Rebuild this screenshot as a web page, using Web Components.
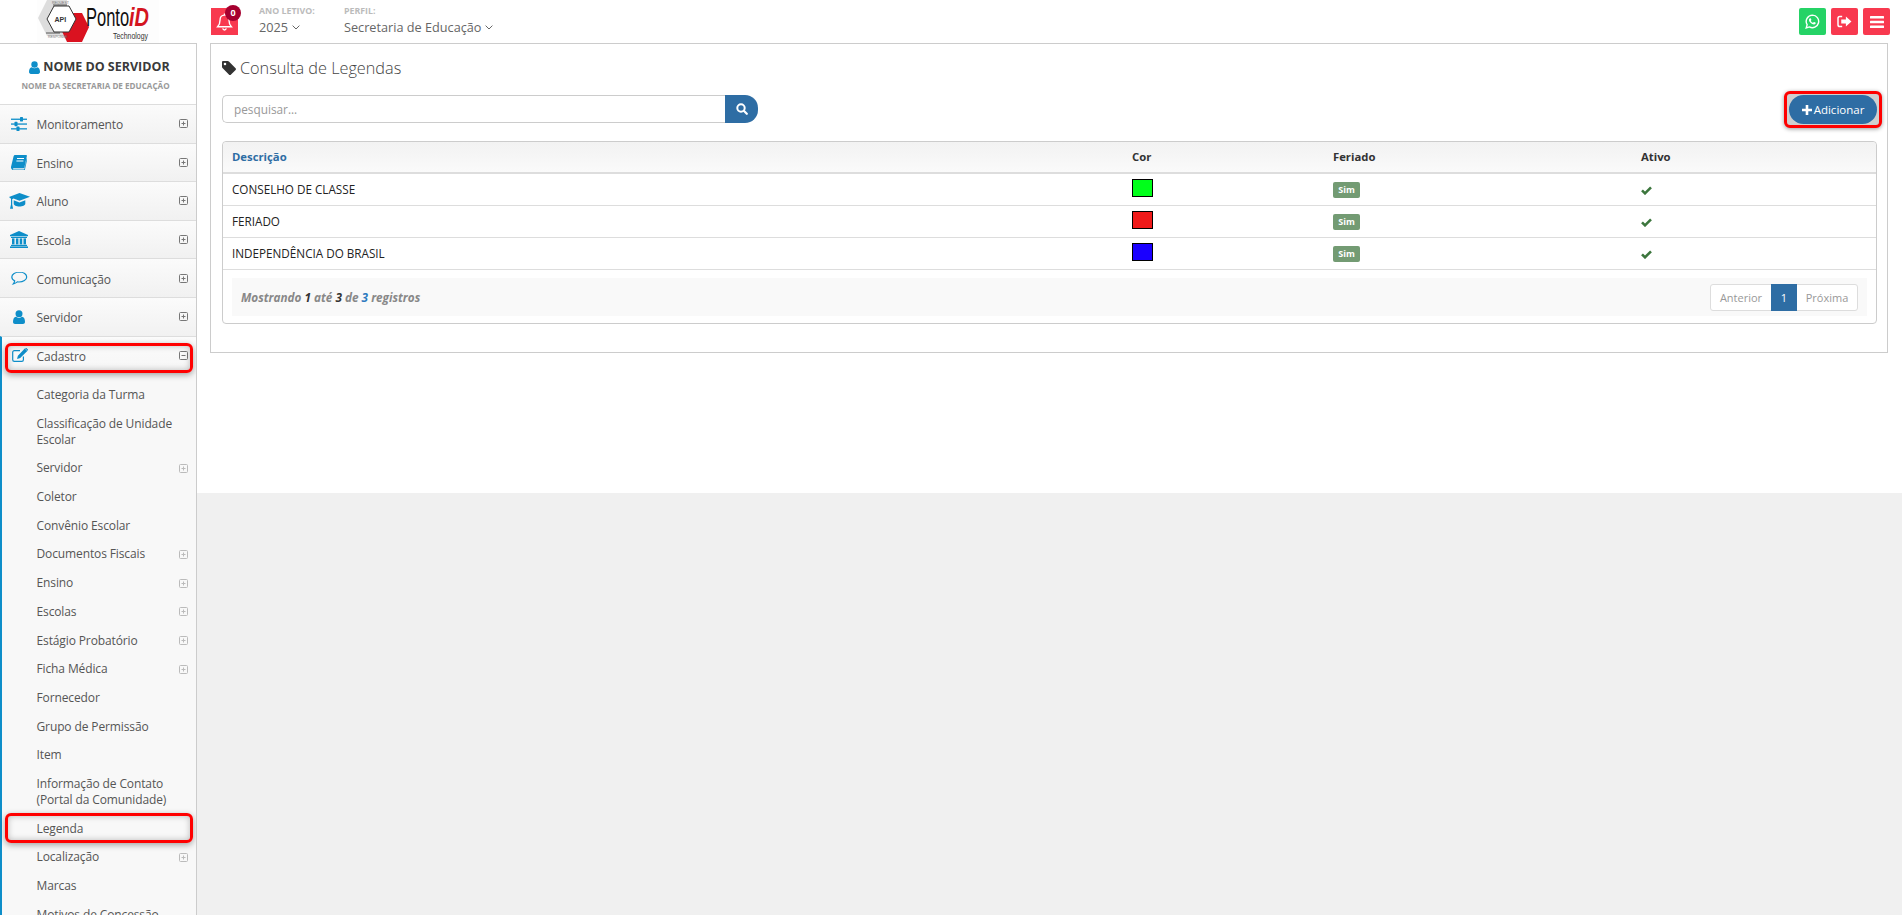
<!DOCTYPE html>
<html lang="pt-BR">
<head>
<meta charset="utf-8">
<title>Consulta de Legendas</title>
<style>
  html, body { margin: 0; height: 100%; overflow: hidden; background: #f0f0f0; }
  body { font-family: "Open Sans", "Liberation Sans", sans-serif; font-size: 12px; color: #555; }
</style>
</head>
<body>
<pid-app>
  <pid-header slot="header"></pid-header>
  <pid-sidebar slot="side">
    <pid-nav-item icon="sliders" label="Monitoramento"></pid-nav-item>
    <pid-nav-item icon="book" label="Ensino"></pid-nav-item>
    <pid-nav-item icon="cap" label="Aluno"></pid-nav-item>
    <pid-nav-item icon="bank" label="Escola"></pid-nav-item>
    <pid-nav-item icon="comment" label="Comunicação"></pid-nav-item>
    <pid-nav-item icon="user" label="Servidor"></pid-nav-item>
    <pid-nav-item icon="edit" label="Cadastro" open marked>
      <pid-sub-item>Categoria da Turma</pid-sub-item>
      <pid-sub-item>Classificação de Unidade Escolar</pid-sub-item>
      <pid-sub-item more>Servidor</pid-sub-item>
      <pid-sub-item>Coletor</pid-sub-item>
      <pid-sub-item>Convênio Escolar</pid-sub-item>
      <pid-sub-item more>Documentos Fiscais</pid-sub-item>
      <pid-sub-item more>Ensino</pid-sub-item>
      <pid-sub-item more>Escolas</pid-sub-item>
      <pid-sub-item more>Estágio Probatório</pid-sub-item>
      <pid-sub-item more>Ficha Médica</pid-sub-item>
      <pid-sub-item>Fornecedor</pid-sub-item>
      <pid-sub-item>Grupo de Permissão</pid-sub-item>
      <pid-sub-item>Item</pid-sub-item>
      <pid-sub-item>Informação de Contato (Portal da Comunidade)</pid-sub-item>
      <pid-sub-item marked>Legenda</pid-sub-item>
      <pid-sub-item more>Localização</pid-sub-item>
      <pid-sub-item>Marcas</pid-sub-item>
      <pid-sub-item>Motivos de Concessão</pid-sub-item>
    </pid-nav-item>
  </pid-sidebar>
  <pid-legend-page slot="main">
    <pid-legend-row color="#00ff1a" active>CONSELHO DE CLASSE</pid-legend-row>
    <pid-legend-row color="#f01a1a" active>FERIADO</pid-legend-row>
    <pid-legend-row color="#1a00ff" active>INDEPENDÊNCIA DO BRASIL</pid-legend-row>
  </pid-legend-page>
</pid-app>

<script>
// icons are all hand drawn, same names used by the nav items and buttons
const ICONS = {
  sliders: `<svg viewBox="0 0 16 14" width="16" height="14" fill="#0e8ec9"><rect x="0" y="1.6" width="16" height="1.3"/><rect x="0" y="6.4" width="16" height="1.3"/><rect x="0" y="11.2" width="16" height="1.3"/><rect x="9" y="0" width="3" height="4.4" rx=".6"/><rect x="3.5" y="4.8" width="3" height="4.4" rx=".6"/><rect x="5.5" y="9.6" width="3" height="4.4" rx=".6"/></svg>`,
  book: `<svg viewBox="0 0 16 15" width="16" height="15"><path fill="#0e8ec9" d="M4 0h11.2c.6 0 .8.4.7 1L13.400 12.400c-.1.5-.4.8-1 .8H2.800c-.7 0-1 .3-.9.7s.4.5.9.5h9.600c.5 0 .8-.2 1-.7l2.300-10.400.3.2c.3.2.3.5.2.9l-2.300 10.300c-.2.500-.6.800-1.200.800H2.300C1 14.500 0 13.600 0 12.400c0-.3 0-.6.1-.9L2.600 1.200C2.800.4 3.300 0 4 0z"/><path stroke="#fff" stroke-width="1" d="M6 3.500h7M5.400 6h7"/></svg>`,
  cap: `<svg viewBox="0 0 21 16" width="21" height="16" fill="#0e8ec9"><path d="M10.500 0 21 3.800 10.500 7.800 4.500 5.500 3.200 6.200v5.300l.9 4.200H1l1-4.200V5.800L0 4z"/><path d="M4.700 7.200 10.500 9.400l5.800-2.200v3.500c0 1.500-2.600 2.800-5.800 2.800s-5.800-1.300-5.800-2.800z"/></svg>`,
  bank: `<svg viewBox="0 0 18 17" width="18" height="17" fill="#0e8ec9"><path d="M9 0 18 4v1.300H0V4z"/><rect x="1" y="5.800" width="16" height="1.200"/><rect x="2" y="7.400" width="2.500" height="6"/><rect x="5.900" y="7.400" width="2.500" height="6"/><rect x="9.700" y="7.400" width="2.500" height="6"/><rect x="13.500" y="7.400" width="2.500" height="6"/><rect x="1" y="13.800" width="16" height="1.200"/><rect x="0" y="15.400" width="18" height="1.600"/></svg>`,
  comment: `<svg viewBox="0 0 17 15" width="17" height="15" fill="none" stroke="#0e8ec9" stroke-width="1.200"><path d="M8.500 1C4.300 1 .8 3.200.8 6c0 1.600 1.100 3 2.900 3.900-.2 1.100-.7 2.200-1.400 3 1.500-.3 3-1.100 4-2 .6.100 1.200.100 1.700.100 4.200 0 7.700-2.200 7.700-5S12.700 1 8.500 1z"/></svg>`,
  user: `<svg viewBox="0 0 12 14" width="12" height="14" fill="#0e8ec9"><circle cx="6" cy="3.700" r="3.500"/><path d="M0 12c0-3 1-5 3-5.200.8.700 1.800 1.100 3 1.100s2.200-.4 3-1.100c2 .2 3 2.200 3 5.200 0 1.300-.9 2-2 2H2c-1.100 0-2-.7-2-2z"/></svg>`,
  edit: `<svg viewBox="0 0 16 14" width="16" height="14" fill="none"><path stroke="#0e8ec9" stroke-width="1.200" d="M8 2.600H2.300C1.400 2.600.7 3.300.7 4.200v7.500c0 .9.700 1.600 1.600 1.600h7.500c.9 0 1.600-.7 1.600-1.600V8.500"/><path fill="#0e8ec9" d="M12.800.6 15.300 3 8.200 10.100 5 11l.9-3.300zM13.500 0c.3-.2.600-.2.900 0l1.500 1.500c.2.300.2.600 0 .9l-.3.300-2.400-2.400z"/></svg>`,
  tag: `<svg viewBox="0 0 14 14" width="14" height="14"><path fill="#333" d="M0 1.200C0 .5.500 0 1.200 0h4.500c.5 0 .9.200 1.200.5l6.700 6.700c.5.500.5 1.200 0 1.700l-4.800 4.800c-.5.500-1.200.5-1.700 0L.5 6.900C.2 6.600 0 6.200 0 5.700zM3 4.300a1.300 1.300 0 1 0 0-2.600 1.300 1.300 0 0 0 0 2.600z"/></svg>`,
  search: `<svg viewBox="0 0 12 12" width="12" height="12"><circle cx="5" cy="5" r="3.700" fill="none" stroke="#fff" stroke-width="2"/><path stroke="#fff" stroke-width="2.200" stroke-linecap="round" d="M8 8l2.800 2.800"/></svg>`,
  plus: `<svg viewBox="0 0 10 10" width="10" height="10"><path fill="#fff" d="M3.700 0h2.600v3.700H10v2.600H6.300V10H3.700V6.300H0V3.700h3.700z"/></svg>`,
  check: `<svg viewBox="0 0 11 9" width="11" height="9"><path fill="none" stroke="#3c763d" stroke-width="2.600" d="M1 4.300l3 3 6-6"/></svg>`,
  chevron: `<svg viewBox="0 0 8 5" width="8" height="5"><path fill="none" stroke="#666" stroke-width="1" d="M.6.600 4 4l3.400-3.400"/></svg>`
};

function boxIcon(minus, color) {
  const cross = minus ? "M2.500 4.500h4" : "M2.500 4.500h4M4.500 2.500v4";
  return `<svg viewBox="0 0 9 9" width="9" height="9" fill="none" stroke="${color}"><rect x=".5" y=".5" width="8" height="8" rx="1"/><path d="${cross}"/></svg>`;
}

class PidApp extends HTMLElement {
  constructor() {
    super();
    this.attachShadow({ mode: "open" });
    this.shadowRoot.innerHTML = `
      <style>
        :host { display: grid; grid-template-columns: 197px 1fr; grid-template-rows: 43px 1fr; height: 915px; overflow: hidden; }
        .top { grid-column: 1 / 3; }
        .main { min-width: 0; }
      </style>
      <div class="top"><slot name="header"></slot></div>
      <div><slot name="side"></slot></div>
      <div class="main"><slot name="main"></slot></div>`;
  }
}

class PidHeader extends HTMLElement {
  constructor() {
    super();
    this.attachShadow({ mode: "open" });
    this.shadowRoot.innerHTML = `
      <style>
        :host { display: flex; align-items: flex-start; height: 43px; background: #fff; font-family: "Open Sans", sans-serif; }
        .logo { width: 197px; height: 43px; padding-left: 37px; box-sizing: border-box; flex: none; }
        .bell { position: relative; width: 27px; height: 27px; margin: 8px 21px 0 14px; background: #f8394f; display: flex; align-items: center; justify-content: center; flex: none; }
        .badge { position: absolute; right: -3px; top: -3px; width: 16px; height: 16px; border-radius: 50%; background: #a5002f; color: #fff; font-size: 9px; font-weight: 700; line-height: 16px; text-align: center; }
        .field { margin-top: 5px; display: flex; flex-direction: column; }
        .field b { font-size: 8.800px; line-height: 13px; font-weight: 700; color: #bbb; white-space: nowrap; }
        .field span { font-size: 12.700px; line-height: 19px; color: #666; display: flex; align-items: center; gap: 4px; white-space: nowrap; }
        .field.year { width: 85px; }
        .tools { margin-left: auto; margin-top: 8px; margin-right: 12px; display: flex; gap: 5px; }
        .tool { width: 27px; height: 27px; border-radius: 2px; background: #f8394f; display: flex; align-items: center; justify-content: center; }
        .tool.green { background: #25d366; }
      </style>
      <div class="logo">
        <svg width="122" height="43" viewBox="0 0 122 43">
          <rect width="122" height="43" fill="#fdfdfd"/>
          <path fill="#ddd" d="M10 0h20v36H10L1 18z"/>
          <path fill="#da1220" d="M30 13h15l7 14-7 15H30l-7-15z"/>
          <path fill="#fff" stroke="#333" stroke-width="1" d="M17 6h15l7 13-7 13H17l-7-13z"/>
          <text x="17.500" y="22" font-family="Liberation Sans" font-size="7" font-weight="700" fill="#333">API</text>
          <path stroke="#333" stroke-width=".8" d="M16 5h14M9 33h14"/>
          <text x="15" y="3.500" font-family="Liberation Sans" font-size="3.500" fill="#777">REQUEST</text>
          <text x="11" y="37.500" font-family="Liberation Sans" font-size="3.500" fill="#777">RESPONSE</text>
          <g transform="translate(49 26) scale(.66 1)"><text font-family="Liberation Sans" font-size="25" fill="#111">Ponto</text></g>
          <g transform="translate(92 26) scale(.8 1)"><text font-family="Liberation Sans" font-size="25" font-style="italic" font-weight="700" fill="#d4141f">iD</text></g>
          <g transform="translate(76 39) scale(.77 1)"><text font-family="Liberation Sans" font-size="9" fill="#333">Technology</text></g>
        </svg>
      </div>
      <div class="bell">
        <svg viewBox="0 0 16 17" width="17" height="18" fill="none" stroke="#fff" stroke-width="1.300"><path d="M8 2c-2.800 0-4.200 2-4.200 4.500 0 3.500-1 5-2.300 6.500h13c-1.300-1.500-2.300-3-2.300-6.500C12.200 4 10.800 2 8 2z"/><path d="M6.300 14.500c.3 1 .9 1.500 1.700 1.500s1.400-.5 1.700-1.500M8 .5V2"/></svg>
        <span class="badge">0</span>
      </div>
      <div class="field year"><b>ANO LETIVO:</b><span>2025 ${ICONS.chevron}</span></div>
      <div class="field"><b>PERFIL:</b><span>Secretaria de Educação ${ICONS.chevron}</span></div>
      <div class="tools">
        <div class="tool green"><svg viewBox="0 0 16 16" width="15" height="15" fill="none"><path stroke="#fff" stroke-width="1.500" d="M8 1.200a6.700 6.700 0 0 0-5.700 10.200L1.300 14.800l3.400-1A6.700 6.700 0 1 0 8 1.200z"/><path fill="#fff" d="M5.600 4.500c.3 0 .5 0 .6.300l.6 1.400c0 .2 0 .4-.4.800-.2.200-.2.300 0 .6.500.8 1.100 1.300 1.900 1.700.2.100.4.100.5-.1l.5-.6c.2-.2.300-.2.500-.1l1.300.6c.2.100.3.200.3.400 0 .8-.7 1.500-1.700 1.600-1 .1-2.800-.6-4.100-2-1-1.100-1.500-2.300-1.300-3.200.1-.7.700-1.400 1.300-1.400z"/></svg></div>
        <div class="tool"><svg viewBox="0 0 16 14" width="15" height="13"><path fill="none" stroke="#fff" stroke-width="1.600" d="M5.500 1.500H3C1.900 1.500 1 2.400 1 3.500v7c0 1.100.9 2 2 2h2.500"/><path fill="#fff" d="M4.500 4.800h5V1.500L15.500 7l-6 5.500V9.200h-5z"/></svg></div>
        <div class="tool"><svg viewBox="0 0 14 12" width="14" height="12" fill="#fff"><rect width="14" height="2.600" rx=".5"/><rect y="4.700" width="14" height="2.600" rx=".5"/><rect y="9.400" width="14" height="2.600" rx=".5"/></svg></div>
      </div>`;
  }
}

class PidSidebar extends HTMLElement {
  constructor() {
    super();
    this.attachShadow({ mode: "open" });
    this.shadowRoot.innerHTML = `
      <style>
        :host { display: block; height: 872px; overflow: hidden; box-sizing: border-box; background: #f8f8f8; border-top: 1px solid #ccc; border-right: 1px solid #ccc; font-family: "Open Sans", sans-serif; }
        .user { height: 60px; background: #fff; display: flex; flex-direction: column; align-items: center; padding-right: 1px; }
        .name { margin-top: 14px; margin-left: 4px; font-size: 12.500px; line-height: 18px; font-weight: 700; color: #3a3a3a; display: flex; align-items: center; gap: 3px; white-space: nowrap; }
        .org { margin-top: 4px; margin-right: 4px; font-size: 8.100px; line-height: 12px; font-weight: 700; color: #999; white-space: nowrap; }
      </style>
      <div class="user">
        <div class="name">${ICONS.user.replace('width="12" height="14"', 'width="11" height="13"')} NOME DO SERVIDOR</div>
        <div class="org">NOME DA SECRETARIA DE EDUCAÇÃO</div>
      </div>
      <slot></slot>`;
  }
}

class PidNavItem extends HTMLElement {
  connectedCallback() {
    if (this.shadowRoot) return;
    this.attachShadow({ mode: "open" });
    const open = this.hasAttribute("open");
    const marked = this.hasAttribute("marked");
    this.shadowRoot.innerHTML = `
      <style>
        :host { display: block; }
        .row { position: relative; height: 38.600px; box-sizing: border-box; display: flex; align-items: center; padding: 0 8px 0 0; border-top: 1px solid #ddd; background: linear-gradient(#fbfbfb, #f1f1f1); font-size: 12px; letter-spacing: -.12px; color: #555; }
        .ico { width: 37px; display: flex; justify-content: center; padding-left: 1px; box-sizing: border-box; flex: none; }
        .lbl { flex: 1; padding-top: 2px; margin-left: -.5px; }
        .sub { border-left: 2px solid #0e8ec9; padding: 6.500px 0 0; background: #f8f8f8; }
        .open .row { border-left: 2px solid #0e8ec9; background: linear-gradient(#fbfbfb, #f6f6f6); }
        .open .ico { width: 35px; }
        .mark { position: absolute; left: 5px; right: 3px; top: 6px; height: 30px; box-sizing: border-box; border: 3px solid #f00; border-radius: 6px; box-shadow: 0 2px 6px rgba(0,0,0,.35), inset 0 0 6px rgba(0,0,0,.25); }
        .open .mark { left: 3px; }
      </style>
      <div class="${open ? "open" : ""}">
        <div class="row">
          <span class="ico">${ICONS[this.getAttribute("icon")]}</span>
          <span class="lbl">${this.getAttribute("label")}</span>
          ${boxIcon(open, "#777")}
          ${marked ? '<span class="mark"></span>' : ""}
        </div>
        ${open ? '<div class="sub"><slot></slot></div>' : ""}
      </div>`;
  }
}

class PidSubItem extends HTMLElement {
  connectedCallback() {
    if (this.shadowRoot) return;
    this.attachShadow({ mode: "open" });
    this.shadowRoot.innerHTML = `
      <style>
        :host { display: block; position: relative; font-size: 12px; letter-spacing: -.12px; line-height: 16px; color: #555; }
        .item { display: flex; align-items: center; padding: 6.350px 8px 6.350px 34.500px; }
        .txt { flex: 1; padding-right: 4px; }
        .mark { position: absolute; left: 3px; right: 3px; top: -1px; height: 30px; box-sizing: border-box; border: 3px solid #f00; border-radius: 6px; box-shadow: 0 2px 6px rgba(0,0,0,.35), inset 0 0 6px rgba(0,0,0,.25); }
      </style>
      <div class="item">
        <span class="txt"><slot></slot></span>
        ${this.hasAttribute("more") ? boxIcon(false, "#bbb") : ""}
      </div>
      ${this.hasAttribute("marked") ? '<span class="mark"></span>' : ""}`;
  }
}

class PidLegendRow extends HTMLElement {
  connectedCallback() {
    if (this.shadowRoot) return;
    this.attachShadow({ mode: "open" });
    this.shadowRoot.innerHTML = `
      <style>
        :host { display: grid; grid-template-columns: 900px 201px 308px 1fr; height: 32px; box-sizing: border-box; border-bottom: 1px solid #ddd; font-size: 11.700px; color: #222; }
        .cell { padding-left: 9px; display: flex; align-items: center; }
        .first { padding-bottom: 2px; }
        .swatch { width: 21px; height: 18px; box-sizing: border-box; border: 1px solid #000; margin-top: -3px; background: ${this.getAttribute("color")}; }
        .sim { background: #739b73; color: #fff; font-size: 9px; font-weight: 700; line-height: 16px; width: 27px; text-align: center; border-radius: 2px; margin-top: 1px; }
        .ok { padding-top: 2px; }
      </style>
      <div class="cell first"><slot></slot></div>
      <div class="cell"><span class="swatch"></span></div>
      <div class="cell"><span class="sim">Sim</span></div>
      <div class="cell ok">${this.hasAttribute("active") ? ICONS.check : ""}</div>`;
  }
}

class PidLegendPage extends HTMLElement {
  constructor() {
    super();
    this.attachShadow({ mode: "open" });
    this.shadowRoot.innerHTML = `
      <style>
        :host { display: block; height: 450px; background: #fff; padding: 0 14px 0 13px; box-sizing: border-box; font-family: "Open Sans", sans-serif; }
        .panel { border: 1px solid #ccc; height: 310px; box-sizing: border-box; padding: 0 10px 0 11px; }
        h1 { margin: 0; padding-top: 11px; box-sizing: border-box; font-size: 16.250px; line-height: 24px; font-weight: 300; color: #444; display: flex; align-items: center; gap: 4px; height: 36px; }
        .bar { margin-top: 15px; display: flex; justify-content: space-between; align-items: flex-start; }
        .search { display: flex; width: 536px; height: 28px; }
        .input { flex: 1; border: 1px solid #ccc; border-right: 0; border-radius: 5px 0 0 5px; box-sizing: border-box; padding-left: 11px; font-size: 11.800px; line-height: 26px; color: #999; }
        .go { width: 33px; background: #2e6da4; border-radius: 0 13px 13px 0; display: flex; align-items: center; justify-content: center; }
        .frame { margin: -4px -5px -4px 0; padding: 1px 2px; border: 3px solid #f00; border-radius: 6px; background: #cfcfcf; box-shadow: 0 1px 4px rgba(0,0,0,.4); }
        .add { width: 88px; height: 29px; border-radius: 15px; background: #2e6da4; color: #fff; font-size: 11.500px; display: flex; align-items: center; justify-content: center; gap: 2px; }
        .box { margin-top: 17px; border: 1px solid #ccc; border-radius: 4px; height: 183px; box-sizing: border-box; }
        .head { display: grid; grid-template-columns: 900px 201px 308px 1fr; height: 32px; box-sizing: border-box; border-bottom: 2px solid #ddd; background: linear-gradient(#f2f2f2, #fafafa); border-radius: 4px 4px 0 0; font-size: 11.300px; font-weight: 700; color: #333; align-items: center; padding-bottom: 1px; }
        .head span { padding-left: 9px; }
        .head .first { color: #2e6da4; }
        .foot { margin: 8px 9px 0; height: 38px; background: #f9f9f9; display: flex; align-items: center; justify-content: space-between; padding: 0 9px; }
        .info { font-size: 11.750px; font-style: italic; font-weight: 700; color: #888; }
        .info i.d { color: #333; }
        .info i.b { color: #2e7bbf; }
        .pager { display: flex; height: 27px; border: 1px solid #ddd; border-radius: 3px; box-sizing: border-box; font-size: 11px; color: #999; line-height: 25px; background: #fff; }
        .pager span { padding: 0; text-align: center; }
        .pager .cur { background: #2e6da4; color: #fff; width: 26px; margin: -1px 0; line-height: 27px; }
      </style>
      <div class="panel">
        <h1>${ICONS.tag}<span>Consulta de Legendas</span></h1>
        <div class="bar">
          <div class="search"><div class="input">pesquisar...</div><div class="go">${ICONS.search}</div></div>
          <div class="frame"><div class="add">${ICONS.plus}<span>Adicionar</span></div></div>
        </div>
        <div class="box">
          <div class="head"><span class="first">Descrição</span><span>Cor</span><span>Feriado</span><span>Ativo</span></div>
          <slot></slot>
          <div class="foot">
            <div class="info">Mostrando <i class="d">1</i> até <i class="d">3</i> de <i class="b">3</i> registros</div>
            <div class="pager"><span style="width:60px">Anterior</span><span class="cur">1</span><span style="width:60px">Próxima</span></div>
          </div>
        </div>
      </div>`;
  }
}

customElements.define("pid-app", PidApp);
customElements.define("pid-header", PidHeader);
customElements.define("pid-sidebar", PidSidebar);
customElements.define("pid-nav-item", PidNavItem);
customElements.define("pid-sub-item", PidSubItem);
customElements.define("pid-legend-row", PidLegendRow);
customElements.define("pid-legend-page", PidLegendPage);
</script>
</body>
</html>
